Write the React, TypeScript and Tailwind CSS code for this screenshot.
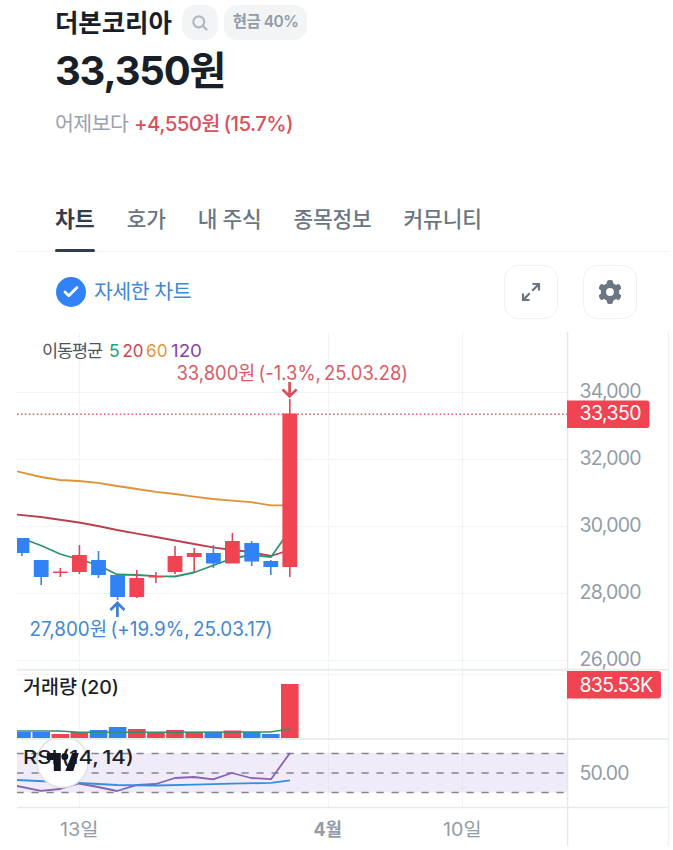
import React from 'react';
import { Check } from 'lucide-react';

type Candle = {
  x: number;
  open: number;
  close: number;
  high: number;
  low: number;
  volume: number; // top of the volume bar
  up: boolean;
};

const RED = '#f04452';
const BLUE = '#3182f6';

const candles: Candle[] = [
  { x: 22, open: 538, close: 553, high: 538, low: 556, volume: 732, up: false },
  { x: 41.2, open: 560, close: 577, high: 560, low: 585, volume: 732, up: false },
  { x: 60.3, open: 571.5, close: 573, high: 568, low: 577, volume: 734, up: true },
  { x: 79.4, open: 555, close: 572, high: 545, low: 574, volume: 732, up: true },
  { x: 98.5, open: 560, close: 575, high: 551, low: 578, volume: 730, up: false },
  { x: 117.6, open: 575, close: 597, high: 575, low: 600, volume: 727, up: false },
  { x: 136.8, open: 578, close: 597, high: 570, low: 598, volume: 729, up: true },
  { x: 155.9, open: 576, close: 577.5, high: 572, low: 583, volume: 732, up: true },
  { x: 175, open: 556, close: 572, high: 546, low: 574, volume: 730, up: true },
  { x: 194.2, open: 553, close: 557, high: 548, low: 572, volume: 732, up: true },
  { x: 213.4, open: 553, close: 563.5, high: 545, low: 568, volume: 732, up: false },
  { x: 232.4, open: 541, close: 563.5, high: 533, low: 563, volume: 730.5, up: true },
  { x: 251.7, open: 543, close: 561.5, high: 541, low: 566, volume: 732, up: false },
  { x: 270.8, open: 561, close: 567, high: 560, low: 575, volume: 734, up: false },
  { x: 289.8, open: 413.5, close: 567, high: 399, low: 577, volume: 684, up: true },
];

const priceLabels = [
  { y: 392, label: '34,000' },
  { y: 459, label: '32,000' },
  { y: 526, label: '30,000' },
  { y: 593, label: '28,000' },
  { y: 660, label: '26,000' },
];

const tabs = ['차트', '호가', '내 주식', '종목정보', '커뮤니티'];

function SearchIcon() {
  return (
    <svg className="w-4 h-4" viewBox="0 0 16 16" fill="none" stroke="#b0b8c1" strokeWidth="2.2" strokeLinecap="round">
      <circle cx="6.8" cy="6.8" r="5.5" />
      <path d="M10.9 10.9l3.6 3.6" />
    </svg>
  );
}

function GearIcon() {
  return (
    <svg className="w-6 h-6" viewBox="-12 -12 24 24" fill="#6b7684">
      <circle r="9.2" />
      {[0, 60, 120, 180, 240, 300].map((deg) => (
        <rect key={deg} x="-3.1" y="-12" width="6.2" height="9" rx="2.2" transform={`rotate(${deg})`} />
      ))}
      <circle r="3.9" fill="#fff" />
    </svg>
  );
}

function ExpandIcon() {
  return (
    <svg className="w-5 h-5" viewBox="0 0 20 20" fill="none" stroke="#6b7684" strokeWidth="2.2">
      <path d="M11.5 2H18v6.5M17.6 2.4l-6.4 6.4M2 11.5V18h6.5M2.4 17.6l6.4-6.4" />
    </svg>
  );
}

function StockChart() {
  return (
    <svg className="block w-[652px] h-[514px] ml-[17px] font-['Inter','Noto_Sans_CJK_KR',sans-serif]" viewBox="17 332 652 514">
      {/* grid */}
      <g stroke="#f2f4f6" strokeWidth="1.2">
        {priceLabels.map((p) => (
          <path key={p.y} d={`M17 ${p.y + 0.5}H567`} />
        ))}
        <path d="M17 674.5H567M79.5 332V807M328.5 332V807M462.5 332V807" />
      </g>

      {/* RSI band */}
      <rect x="17" y="753" width="550" height="39.5" fill="#f0ebf8" />
      <path d="M79.5 753V792M328.5 753V792M462.5 753V792" stroke="#e8e4f1" />
      <path d="M14.5 753.5H567M14.5 773H567M14.5 792.5H567" stroke="#85828d" strokeWidth="1.5" strokeDasharray="7.2 7.8" strokeDashoffset="-2" />

      {/* pane borders */}
      <path d="M17 669.8H669M17 739H669" stroke="#e9edf0" strokeWidth="2" />
      <path d="M17 807.5H669" stroke="#e5eaed" strokeWidth="1.3" />
      <path d="M567.6 332V846" stroke="#e5e8eb" strokeWidth="1.4" />
      <path d="M668.4 332V846" stroke="#edf0f2" strokeWidth="1.2" />

      {/* moving averages */}
      <g fill="none" strokeWidth="1.8" strokeLinejoin="round">
        <path d="M17 471.3L41 477L60 480L79 481L98 482.8L117 486L137 489L156 491.8L175 494L194 496.7L213 499L232 500.6L251 502.2L271 505.4H290" stroke="#dc9437" />
        <path d="M17 514.6L41 517L79 522.5L98 526L117 530L137 533.6L156 537L175 540.5L194 544L213 547.3L232 550L251 552L271 556L290 550" stroke="#b8414f" />
        <path d="M22 539.5L29 541L41 545.5L60 554L79 559.5L98 565L117 574.5L137 575L156 576.2L175 576.5L194 572.5L213 565.5L232 558.5L251 555L271 557L290 530" stroke="#2b966b" />
      </g>
      <path d="M17 414.2H567" stroke="#cf6570" strokeWidth="1.5" strokeDasharray="1.6 2.35" />

      {/* candles and volume */}
      {candles.map((c) => (
        <g key={c.x} fill={c.up ? RED : BLUE}>
          <rect x={c.x - 0.8} y={c.high} width="1.6" height={c.low - c.high} fill={c.up ? '#d94b57' : '#3f83db'} />
          <rect x={c.x - 7.4} y={c.open} width="14.8" height={c.close - c.open} />
          <rect x={c.x - 8.8} y={c.volume} width="17.6" height={738 - c.volume} />
        </g>
      ))}
      <path d="M17 731H60L79 732.2H137L270 732L290 729" fill="none" stroke="#329071" strokeWidth="1.6" />

      {/* RSI lines */}
      <g fill="none" strokeWidth="1.8" strokeLinejoin="round">
        <path d="M17 786L41 790.8L60 789L79 783.5L98 787L117 791L137 784.8L156 784L175 778L194 777L213 779.4L232 773L251 778L271 779.2L290 753" stroke="#8662b5" />
        <path d="M17 780L60 782L79 783L117 785L156 785.5L194 784.7L232 783.7L271 782.9L290 780.3" stroke="#348fe0" />
      </g>

      {/* high / low markers */}
      <path d="M289.6 382V396M282.6 389.4L289.6 396.4L296.6 389.4" fill="none" stroke="#dc4b57" strokeWidth="2.7" />
      <path d="M117.4 617V603M110.4 610L117.4 603L124.4 610" fill="none" stroke="#3b80d7" strokeWidth="2.7" />
      <g fontSize="19.5">
        <text x="176.5" y="379.5" fill="#d95b65" wordSpacing="-2" textLength="231.5" lengthAdjust="spacingAndGlyphs">33,800원 (-1.3%, 25.03.28)</text>
        <text x="29.5" y="635.5" fill="#4287d4" wordSpacing="-2" textLength="243" lengthAdjust="spacingAndGlyphs">27,800원 (+19.9%, 25.03.17)</text>
      </g>

      <g fontSize="17.5">
        <text x="42" y="356.5" fill="#4e5560" textLength="61">이동평균</text>
        <text x="109" y="356.5" fill="#2b9f70">5</text>
        <text x="122.5" y="356.5" fill="#c94453" textLength="21" lengthAdjust="spacingAndGlyphs">20</text>
        <text x="146" y="356.5" fill="#df9639" textLength="21.5" lengthAdjust="spacingAndGlyphs">60</text>
        <text x="171" y="356.5" fill="#8545a2" textLength="31" lengthAdjust="spacingAndGlyphs">120</text>
      </g>

      {/* price axis */}
      <g fontSize="19.5" fill="#929ca6">
        {priceLabels.map((p) => (
          <text key={p.label} x="579.5" y={p.y + 5.5} textLength="62">{p.label}</text>
        ))}
        <text x="579.5" y="779.5" textLength="50">50.00</text>
      </g>
      <path d="M567 400.5H646.5A3 3 0 0 1 649.5 403.5V425A3 3 0 0 1 646.5 428H567Z" fill={RED} />
      <path d="M567 671H658A3 3 0 0 1 661 674V695.5A3 3 0 0 1 658 698.5H567Z" fill={RED} />
      <g fontSize="19.5" fill="#fff">
        <text x="579.5" y="420" textLength="62">33,350</text>
        <text x="579.5" y="691.5" textLength="73.5">835.53K</text>
      </g>

      {/* TradingView badge, cut off by the top of its pane */}
      <clipPath id="rsi-pane">
        <rect x="17" y="740" width="550" height="67" />
      </clipPath>
      <circle cx="62.5" cy="762" r="25.5" fill="#fff" stroke="#dfdfe9" strokeWidth="1.5" clipPath="url(#rsi-pane)" />

      <g fontSize="19" fontWeight="500" fill="#191f28">
        <text x="23" y="694" wordSpacing="-2" textLength="96" lengthAdjust="spacingAndGlyphs">거래량 (20)</text>
        <text x="23" y="763.5" wordSpacing="-2" textLength="111" lengthAdjust="spacingAndGlyphs">RSI (14, 14)</text>
      </g>
      <path transform="translate(46.8 749)" fill="#131722" d="M14 22H7V11H0V4h14v18zM26.5 22h-8l7-18h6.5L26.5 22zM21.5 7.5a3.5 3.5 0 1 1-7 0 3.5 3.5 0 0 1 7 0z" />

      {/* dates */}
      <g fontSize="18.5" fill="#929ca6">
        <text x="60" y="836" textLength="38.5" lengthAdjust="spacingAndGlyphs">13일</text>
        <text x="313.5" y="836" textLength="28.5" lengthAdjust="spacingAndGlyphs" fontWeight="700">4월</text>
        <text x="443" y="836" textLength="38.5" lengthAdjust="spacingAndGlyphs">10일</text>
      </g>
    </svg>
  );
}

export default function App() {
  return (
    <div className="w-[673px] h-[850px] overflow-hidden bg-white font-['Inter','Noto_Sans_CJK_KR',sans-serif] text-[#191f28]">
      <header className="h-[192px] pl-[55px] pt-[5px]">
        <div className="flex items-center h-[35px]">
          <h1 className="w-[127px] text-[25.5px] leading-[35px] font-bold tracking-[-0.1px] whitespace-nowrap">더본코리아</h1>
          <button className="flex items-center justify-center w-9 h-[35px] rounded-[13px] bg-[#f2f4f6]">
            <SearchIcon />
          </button>
          <span className="ml-1.5 w-[83px] h-[35px] rounded-[13px] bg-[#f2f4f6] text-center text-[15.5px] leading-[33px] tracking-[-0.5px] font-semibold text-[#929ca6] whitespace-nowrap">
            현금 40%
          </span>
        </div>
        <p className="h-[60px] text-[40px] leading-[61px] font-bold tracking-[-1.2px]">33,350원</p>
        <p className="mt-[7px] h-8 text-[20.5px] leading-[33px] tracking-[-0.2px] whitespace-nowrap">
          <span className="text-[#9aa3ad] tracking-[-0.5px]">어제보다</span>{' '}
          <span className="font-medium tracking-[-0.6px] [word-spacing:-1px] text-[#d9515c]">+4,550원 (15.7%)</span>
        </p>
      </header>

      <nav className="flex gap-8 h-[60px] ml-[17px] mr-1 pl-[38px] border-b-[1.5px] border-[#f2f4f6]">
        {tabs.map((tab, i) => (
          <button
            key={tab}
            className={
              i === 0
                ? 'relative h-[60px] pb-[5px] text-[21.6px] leading-[49px] font-bold text-[#333d4b] after:absolute after:left-0 after:bottom-0 after:h-[3.5px] after:w-full after:rounded-full after:bg-[#333d4b]'
                : 'h-[60px] pb-[5px] text-[21.4px] leading-[49px] tracking-[-0.15px] [word-spacing:-0.5px] font-medium text-[#6b7684] whitespace-nowrap'
            }
          >
            {tab}
          </button>
        ))}
      </nav>

      <div className="flex items-center h-20 pl-14 pr-9">
        <span className="flex items-center justify-center w-[30px] h-[30px] rounded-full bg-[#3182f6]">
          <Check className="w-[18px] h-[18px] text-white" strokeWidth={3.6} />
        </span>
        <span className="ml-2 text-[20.5px] tracking-[-0.5px] text-[#4287d4]">자세한 차트</span>
        <button className="flex items-center justify-center ml-auto w-[54px] h-[54px] rounded-[14px] border border-[#eff1f4]">
          <ExpandIcon />
        </button>
        <button className="flex items-center justify-center ml-[25px] w-[54px] h-[54px] rounded-[14px] border border-[#eff1f4]">
          <GearIcon />
        </button>
      </div>

      <StockChart />
    </div>
  );
}
